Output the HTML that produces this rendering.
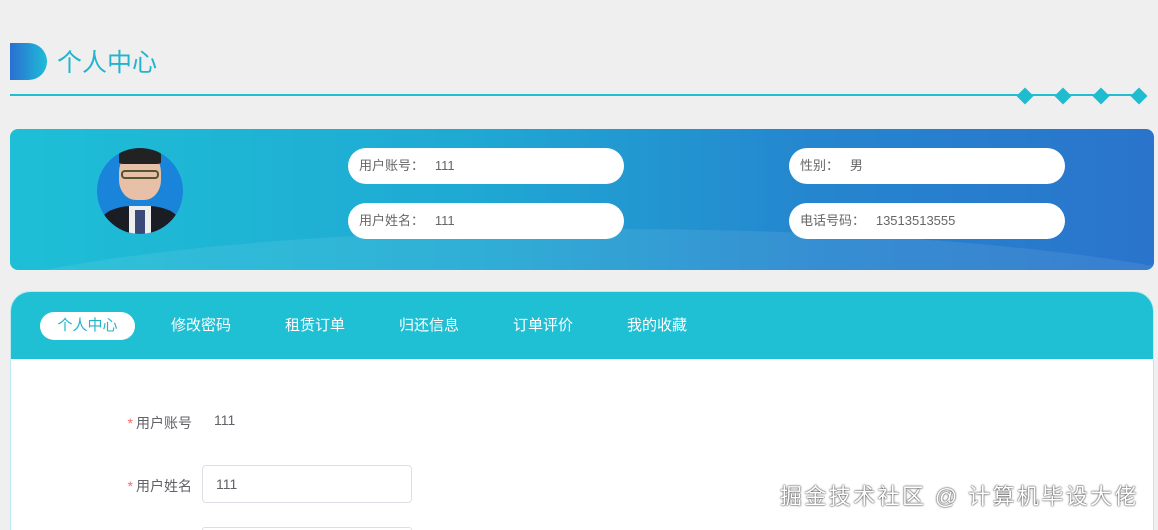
<!DOCTYPE html>
<html><head><meta charset="utf-8"><style>
*{margin:0;padding:0;box-sizing:border-box}
html,body{width:1158px;height:530px;overflow:hidden}
body{background:#efefef;font-family:"Liberation Sans","Noto Sans CJK SC",sans-serif;position:relative}
.abs{position:absolute}
.pill{position:absolute;width:276px;height:36px;background:#fff;border-radius:18px;font-size:13px;color:#666;line-height:36px;padding-left:11px}
.tab{position:absolute;top:316px;font-size:15px;color:#fff;line-height:20px}
.lbl{position:absolute;font-size:14px;color:#606266;width:90px;text-align:right;left:102px}
.lbl b{color:#f56c6c;font-weight:normal;margin-right:3px}
.inp{position:absolute;left:202px;width:210px;height:38px;border:1px solid #dcdfe6;border-radius:4px;background:#fff;font-size:14px;color:#606266;line-height:36px;padding-left:13px}
</style></head><body>
<div class="abs" style="left:10px;top:43px;width:37px;height:37px;border-radius:0 19px 19px 0;background:linear-gradient(90deg,#2a6fd0,#1fbcd8)"></div>
<div class="abs" style="left:57px;top:48px;font-size:25px;color:#22b4cc;line-height:30px">个人中心</div>
<div class="abs" style="left:10px;top:94px;width:1130px;height:2px;background:#22bfd3"></div>
<div class="abs" style="left:1019px;top:90px;width:12px;height:12px;background:#1fbcd0;transform:rotate(45deg)"></div>
<div class="abs" style="left:1057px;top:90px;width:12px;height:12px;background:#1fbcd0;transform:rotate(45deg)"></div>
<div class="abs" style="left:1095px;top:90px;width:12px;height:12px;background:#1fbcd0;transform:rotate(45deg)"></div>
<div class="abs" style="left:1133px;top:90px;width:12px;height:12px;background:#1fbcd0;transform:rotate(45deg)"></div>

<div class="abs" style="left:10px;top:129px;width:1144px;height:141px;border-radius:8px;overflow:hidden;background:linear-gradient(90deg,#1ebfd6 0%,#1fa9d3 40%,#2586cf 70%,#2a74cc 100%)">
  <div class="abs" style="left:-100px;top:100px;width:1400px;height:200px;border-radius:50%;background:rgba(255,255,255,0.08)"></div>
</div>
<div class="abs" style="left:97px;top:148px;width:86px;height:86px;border-radius:50%;background:#1a84da;overflow:hidden">
  <div class="abs" style="left:22px;top:2px;width:42px;height:50px;border-radius:45% 45% 40% 40%;background:#e8c0a8"></div>
  <div class="abs" style="left:22px;top:0px;width:42px;height:16px;border-radius:40% 40% 10% 10%;background:#222"></div>
  <div class="abs" style="left:24px;top:22px;width:38px;height:9px;border:2px solid #553;border-radius:4px"></div>
  <div class="abs" style="left:4px;top:58px;width:78px;height:40px;border-radius:40% 40% 0 0;background:#1b1d25"></div>
  <div class="abs" style="left:32px;top:58px;width:22px;height:30px;background:#eee"></div>
  <div class="abs" style="left:38px;top:62px;width:10px;height:26px;background:#3a4a78"></div>
</div>
<div class="pill" style="left:348px;top:148px">用户账号：&nbsp;&nbsp;&nbsp;111</div>
<div class="pill" style="left:348px;top:203px">用户姓名：&nbsp;&nbsp;&nbsp;111</div>
<div class="pill" style="left:789px;top:148px">性别：&nbsp;&nbsp;&nbsp;男</div>
<div class="pill" style="left:789px;top:203px">电话号码：&nbsp;&nbsp;&nbsp;13513513555</div>

<div class="abs" style="left:10px;top:291px;width:1144px;height:239px;border-radius:20px 20px 0 0;background:#fff;border:1px solid #bfe9ef;border-bottom:none;overflow:hidden">
  <div style="height:67px;background:#1fbfd4"></div>
</div>
<div class="abs" style="left:40px;top:312px;width:95px;height:28px;border-radius:14px;background:#fff;color:#22b4cc;font-size:15px;text-align:center;line-height:28px">个人中心</div>
<div class="tab" style="left:171px">修改密码</div>
<div class="tab" style="left:285px">租赁订单</div>
<div class="tab" style="left:399px">归还信息</div>
<div class="tab" style="left:513px">订单评价</div>
<div class="tab" style="left:627px">我的收藏</div>

<div class="lbl" style="top:413px"><b>*</b>用户账号</div>
<div class="abs" style="left:214px;top:412px;font-size:14px;color:#606266">111</div>
<div class="lbl" style="top:476px"><b>*</b>用户姓名</div>
<div class="inp" style="top:465px">111</div>
<div class="abs" style="left:202px;top:527px;width:210px;height:3px;border:1px solid #dcdfe6;border-bottom:none;border-radius:4px 4px 0 0;background:#fff"></div>
<div class="abs" style="left:780px;top:482px;font-size:22px;letter-spacing:2.4px;color:#fff;text-shadow:0 0 2px rgba(0,0,0,.7),0 0 1px rgba(0,0,0,.8);line-height:30px;white-space:nowrap">掘金技术社区 @ 计算机毕设大佬</div>
</body></html>
